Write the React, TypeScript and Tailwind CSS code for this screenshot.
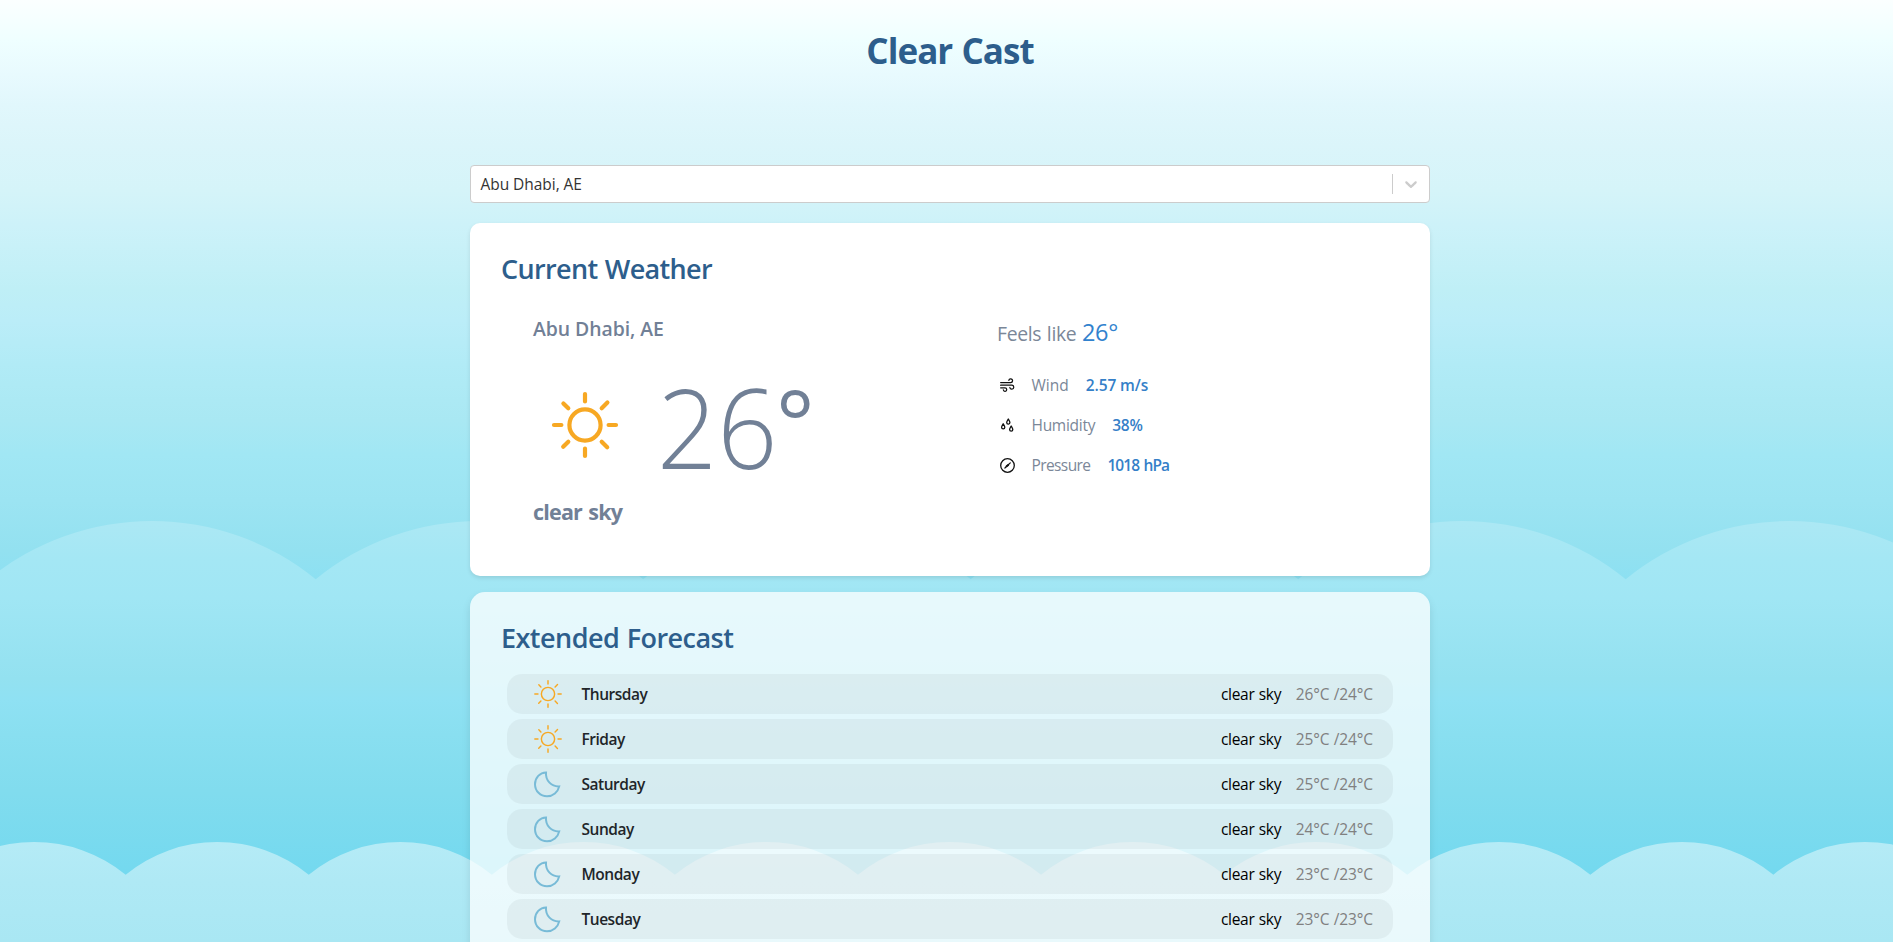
import React from "react";

type Day = { name: string; night?: boolean; high: number; low: number };

const days: Day[] = [
  { name: "Thursday", high: 26, low: 24 },
  { name: "Friday", high: 25, low: 24 },
  { name: "Saturday", night: true, high: 25, low: 24 },
  { name: "Sunday", night: true, high: 24, low: 24 },
  { name: "Monday", night: true, high: 23, low: 23 },
  { name: "Tuesday", night: true, high: 23, low: 23 },
];

// A row of circular arcs meeting in cusps, closed down to the bottom edge.
function cloudPath(start: number, cusp: number, period: number, radius: number, count: number) {
  let d = `M${start} ${cusp}`;
  for (let i = 1; i <= count; i++) {
    d += ` A${radius} ${radius} 0 0 1 ${start + i * period} ${cusp}`;
  }
  return `${d} V942 H${start} Z`;
}

function Clouds() {
  return (
    <svg className="absolute top-0 left-0" width="1900" height="942" viewBox="0 0 1900 942">
      <defs>
        <linearGradient id="back" gradientUnits="userSpaceOnUse" x1="0" y1="521" x2="0" y2="871">
          <stop offset="0" stopColor="#ace8f4" />
          <stop offset="0.11" stopColor="#a4e7f4" />
          <stop offset="0.22" stopColor="#a0e6f4" />
          <stop offset="0.45" stopColor="#93e1f0" />
          <stop offset="0.51" stopColor="#8fe1f3" />
          <stop offset="0.61" stopColor="#89dff0" />
          <stop offset="0.77" stopColor="#81dcee" />
          <stop offset="1" stopColor="#74d9ef" />
        </linearGradient>
        <linearGradient id="front" gradientUnits="userSpaceOnUse" x1="0" y1="842" x2="0" y2="942">
          <stop offset="0" stopColor="#b5ebf6" />
          <stop offset="0.4" stopColor="#afe9f5" />
          <stop offset="1" stopColor="#a9e7f3" />
        </linearGradient>
      </defs>
      <path d={cloudPath(-11.8, 579.3, 327.5, 259, 6)} fill="url(#back)" />
      <path d={cloudPath(-57.4, 874.7, 183.08, 144.4, 11)} fill="url(#front)" />
    </svg>
  );
}

function Sun({ size, stroke }: { size: number; stroke: number }) {
  return (
    <svg className="shrink-0" width={size} height={size} viewBox="-40 -40 80 80" fill="none" stroke="#f7a823" strokeWidth={stroke} strokeLinecap="round">
      <circle r="15.6" />
      <path d="M0 -23.6V-31M0 23.6V31M-23.6 0H-31M23.6 0H31M-16.7 -16.7L-21.6 -21.6M16.7 -16.7L22.4 -22.4M-16.7 16.7L-21.8 21.8M16.7 16.7L22.2 22.2" />
    </svg>
  );
}

function Moon() {
  return (
    <svg className="shrink-0" width="27" height="27" viewBox="0 0 27 27" fill="none" stroke="#78bbd7" strokeWidth="2" strokeLinejoin="miter">
      <path d="M12 1.4C6 1.5 1 6.6 1 13.2C1 20 6.4 25.3 13 25.3C19 25.3 24 21 25.2 15.4C17.600 15.800 11.300 9.700 12 1.400Z" />
    </svg>
  );
}

function WindIcon() {
  return (
    <svg width="15" height="15" viewBox="0 0 15 15" fill="none" stroke="#111" strokeWidth="1.25" strokeLinecap="round">
      <path d="M0.600 4.600H10.600A1.900 1.900 0 1 0 8.800 2.300" />
      <path d="M0.600 7.200H12A2 2 0 1 1 9.800 9.500" />
      <path d="M0.600 9.900H5A1.700 1.700 0 1 1 3.300 11.800" />
    </svg>
  );
}

function DropsIcon() {
  return (
    <svg width="15" height="15" viewBox="0 0 15 15" fill="none" stroke="#111" strokeWidth="1.3" strokeLinejoin="round">
      <path d="M8.300 1C7.400 2.500 6.700 3.500 6.700 4.500A1.600 1.600 0 0 0 9.900 4.500C9.900 3.500 9.200 2.500 8.300 1Z" />
      <path d="M3.200 5.800C2.300 7.300 1.600 8.300 1.600 9.300A1.600 1.600 0 0 0 4.800 9.300C4.800 8.300 4.100 7.300 3.200 5.800Z" />
      <path d="M11.200 8C10.300 9.500 9.600 10.500 9.600 11.500A1.600 1.600 0 0 0 12.800 11.500C12.800 10.500 12.100 9.500 11.200 8Z" />
    </svg>
  );
}

function GaugeIcon() {
  return (
    <svg width="15" height="15" viewBox="0 0 15 15" fill="none" stroke="#111" strokeLinecap="round">
      <circle cx="7.500" cy="7.500" r="6.800" strokeWidth="1.300" />
      <path d="M4.900 10L10.300 4.900" strokeWidth="1.200" />
      <path d="M6.600 8.300L8.200 6.900" strokeWidth="2" />
    </svg>
  );
}

function Detail({ icon, label, value, labelClass, valueClass }: { icon: React.ReactNode; label: string; value: string; labelClass: string; valueClass: string }) {
  return (
    <div className="flex h-10 items-center text-[15.5px]">
      <span className="w-[34.5px] pl-[2.5px]">{icon}</span>
      <span className={`pt-[2px] text-[#7b8798] ${labelClass}`}>{label}</span>
      <span className={`ml-[17px] pt-[2px] font-semibold text-[#3580c8] ${valueClass}`}>{value}</span>
    </div>
  );
}

export default function App() {
  return (
    <div className="relative h-[942px] w-full overflow-hidden bg-[linear-gradient(180deg,#fbffff_0px,#efffff_40px,#e8fafe_75px,#e1f7fc_105px,#dbf5fa_145px,#d5f4f9_190px,#cdf2f9_225px,#bfeff6_290px,#bbedf8_320px,#b1ebf6_365px,#a9e8f3_420px,#a1e7f4_455px,#9ce4f2_500px,#93e1f0_550px,#8ce0f2_580px)] font-['Open_Sans',sans-serif]">
      <Clouds />
      <div className="relative flex w-[1900px] flex-col items-center">
        <h1 className="flex h-[100px] items-center pt-[2px] text-[35px] font-bold tracking-[-0.95px] text-[#2d5e8c] [word-spacing:1px]">Clear Cast</h1>
        <main className="mt-[65px] w-[960px]">
          <div className="flex h-[38px] items-center rounded border border-[#ccc] bg-white">
            <span className="flex-1 pt-[2px] pl-[9.500px] text-[15.5px] tracking-[-0.05px] text-[#333]">Abu Dhabi, AE</span>
            <span className="my-2 w-px self-stretch bg-[#ccc]" />
            <span className="p-2">
              <svg width="20" height="20" viewBox="0 0 20 20" fill="#ccc">
                <path d="M4.516 7.548c0.436-0.446 1.043-0.481 1.576 0l3.908 3.747 3.908-3.747c0.533-0.481 1.141-0.446 1.574 0 0.436 0.445 0.408 1.197 0 1.615-0.406 0.418-4.695 4.502-4.695 4.502-0.217 0.223-0.502 0.335-0.787 0.335s-0.570-0.112-0.789-0.335c0 0-4.287-4.084-4.695-4.502s-0.436-1.170 0-1.615z" />
              </svg>
            </span>
          </div>

          <section className="mt-5 h-[353px] rounded-[10px] bg-white p-8 shadow-[0_2px_4px_rgba(0,0,0,0.1)]">
            <h2 className="-ml-px text-[27px] leading-7 font-semibold tracking-[-0.65px] text-[#2d5e8c] [word-spacing:1px]">Current Weather</h2>
            <div className="mt-[31px] flex">
              <div className="w-[495px] pl-8 text-[#718096]">
                <p className="-ml-px pt-px text-[19.4px] leading-7 font-semibold tracking-[-0.05px]">Abu Dhabi, AE</p>
                <div className="mt-[23px] flex h-[120px] items-center">
                  <span className="mr-[32px] mb-[3px] ml-[11px]">
                    <Sun size={80} stroke={4.2} />
                  </span>
                  <span className="flex text-[111px] leading-[120px] font-light">
                    <span className="-mr-[8px] inline-block origin-left scale-x-95">26</span>
                    <span className="-mt-[5px] text-[91px] leading-[120px] font-normal">°</span>
                  </span>
                </div>
                <p className="-ml-px mt-3 text-[21.5px] leading-7 font-bold tracking-[-0.8px] [word-spacing:1.5px]">clear sky</p>
              </div>
              <div>
                <p className="h-[51px] pt-[2px] text-[19.4px] leading-8 tracking-[-0.35px] text-[#7b8798] [word-spacing:1px]">
                  Feels like <span className="text-[23.5px] tracking-[-0.35px] text-[#3182ce]">26°</span>
                </p>
                <Detail icon={<WindIcon />} label="Wind" value="2.57 m/s" labelClass="tracking-[0px]" valueClass="tracking-[-0.1px]" />
                <Detail icon={<DropsIcon />} label="Humidity" value="38%" labelClass="tracking-[-0.28px]" valueClass="tracking-[-0.2px]" />
                <Detail icon={<GaugeIcon />} label="Pressure" value="1018 hPa" labelClass="tracking-[-0.6px]" valueClass="tracking-[-0.95px] [word-spacing:1.5px]" />
              </div>
            </div>
          </section>

          <section className="mt-4 h-[400px] rounded-[15px] bg-white/75 p-8 shadow-[0_4px_8px_rgba(0,0,0,0.1)]">
            <h2 className="-ml-px text-[27px] leading-7 font-semibold tracking-[-0.54px] text-[#2d5e8c] [word-spacing:1px]">Extended Forecast</h2>
            <ul className="mx-[5px] mt-[22px] flex flex-col gap-[5px]">
              {days.map((day) => (
                <li key={day.name} className="flex h-10 items-center rounded-[15px] bg-black/[0.045] pr-5 pl-[27px] text-[15.5px]">
                  <span className="flex w-[27px] items-center justify-center">{day.night ? <Moon /> : <Sun size={34} stroke={3.4} />}</span>
                  <span className="ml-[20.500px] flex-1 pt-[2px] font-semibold tracking-[-0.47px] text-[#212529]">{day.name}</span>
                  <span className="pt-[2px] tracking-[-0.28px] text-black [word-spacing:0.5px]">clear sky</span>
                  <span className="ml-[14.500px] pt-[2px] tracking-[-0.12px] text-[#808080] [word-spacing:0.5px]">
                    {day.high}°C /{day.low}°C
                  </span>
                </li>
              ))}
            </ul>
          </section>
        </main>
      </div>
    </div>
  );
}
